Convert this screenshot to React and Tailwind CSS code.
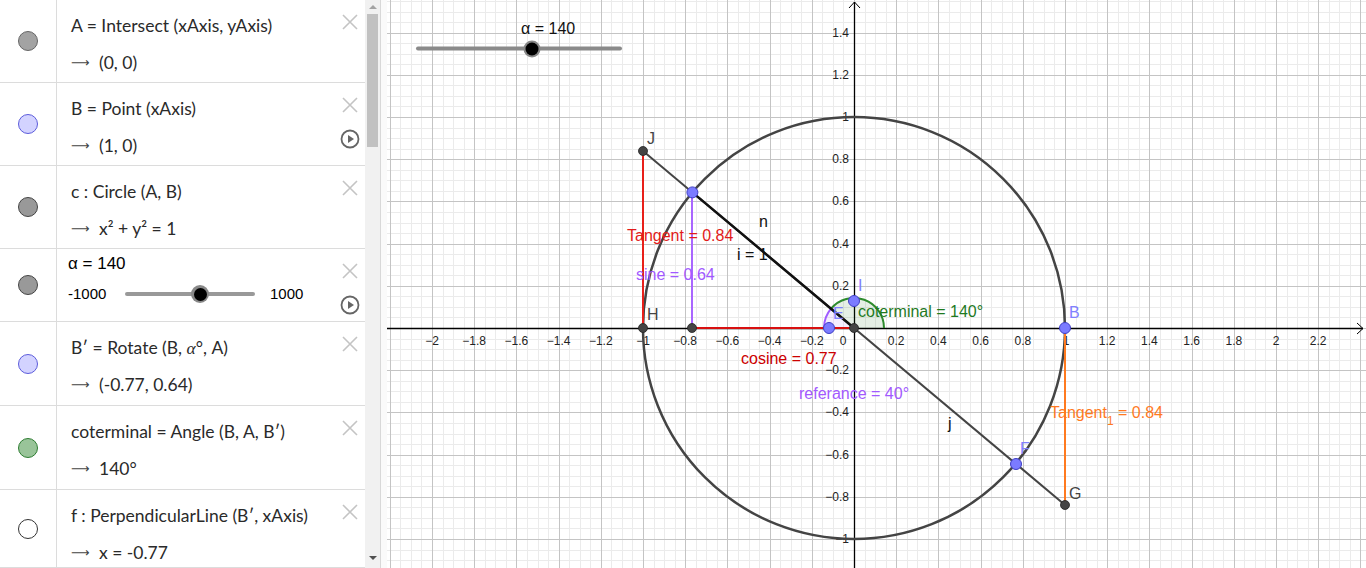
import React from 'react';

const OX = 854;
const OY = 328;
const S = 211;
const px = (x) => OX + x * S;
const py = (y) => OY - y * S;

const rows = [
  { h: 'h-[83px]', dot: 'bg-[#a3a3a3] border-[#666]', line1: 'A = Intersect (xAxis, yAxis)', line2: '(0, 0)' },
  { h: 'h-[83px]', dot: 'bg-[#d3d3ff] border-[#5c5cdb]', line1: 'B = Point (xAxis)', line2: '(1, 0)', play: true },
  { h: 'h-[83px]', dot: 'bg-[#999] border-[#444]', line1: 'c : Circle (A, B)', line2: 'x² + y² = 1' },
  { h: 'h-[73px]', dot: 'bg-[#999] border-[#444]', slider: true, play: true },
  { h: 'h-[84px]', dot: 'bg-[#d3d3ff] border-[#5c5cdb]', rotate: true, line2: '(-0.77, 0.64)' },
  { h: 'h-[84px]', dot: 'bg-[#99c499] border-[#2e7d32]', line1: 'coterminal = Angle (B, A, B′)', line2: '140°' },
  { h: 'flex-1', dot: 'bg-white border-[#333]', line1: 'f : PerpendicularLine (B′, xAxis)', line2: 'x = -0.77' },
];

const CloseIcon = () => (
  <svg width="18" height="18" viewBox="0 0 18 18">
    <path d="M2 2 L16 16 M16 2 L2 16" stroke="#c4c4c4" strokeWidth="1.6" fill="none" />
  </svg>
);

const PlayIcon = () => (
  <svg width="20" height="20" viewBox="0 0 20 20">
    <circle cx="10" cy="10" r="8.5" stroke="#666" strokeWidth="1.8" fill="none" />
    <path d="M8 6 L14 10 L8 14 Z" fill="#666" />
  </svg>
);

const Arrow = () => (
  <span className="inline-block w-[28px] text-[#444] font-['DejaVu_Sans',sans-serif] text-[13px]">⟶</span>
);

const AlgebraRow = ({ row }) => (
  <div className={`${row.h} flex border-b border-[#dcdcdc] shrink-0`}>
    <div className="w-[57px] shrink-0 border-r border-[#dcdcdc] flex items-center justify-center">
      <div className={`w-[20px] h-[20px] rounded-full border ${row.dot}`} />
    </div>
    <div className="flex-1 pl-[14px] text-[#2a2a2a] font-['Lato',sans-serif] text-[17.5px]">
      {row.slider ? (
        <div className="pt-[3px] font-['Liberation_Sans',sans-serif] text-black">
          <div className="text-[17px] h-[24px] leading-[24px] -ml-[3px]">α = 140</div>
          <div className="flex items-center h-[24px] mt-[6px] -ml-[3px] text-[15px]">
            <span className="w-[57px]">-1000</span>
            <div className="relative w-[130px] h-[4px] bg-[#999] rounded-full">
              <div className="absolute left-[66px] -top-[7px] w-[18px] h-[18px] rounded-full bg-[#888] flex items-center justify-center">
                <div className="w-[13px] h-[13px] rounded-full bg-black" />
              </div>
            </div>
            <span className="ml-[15px]">1000</span>
          </div>
        </div>
      ) : (
        <div className="pt-[14px]">
          <div className="h-[24px] leading-[24px] whitespace-nowrap">
            {row.rotate ? (
              <>B′ = Rotate (B, <i className="font-['Liberation_Serif',serif]">α</i>°, A)</>
            ) : (
              row.line1
            )}
          </div>
          <div className="h-[24px] leading-[24px] mt-[13px] flex items-center whitespace-nowrap">
            <Arrow />
            <span>{row.line2}</span>
          </div>
        </div>
      )}
    </div>
    <div className="w-[30px] shrink-0 flex flex-col items-center pt-[13px] gap-[15px]">
      <CloseIcon />
      {row.play && <PlayIcon />}
    </div>
  </div>
);

const Grid = () => {
  const minor = [];
  const major = [];
  const step = S * 0.05;
  for (let i = -60; i <= 60; i++) {
    const x = Math.round(OX + i * step) + 0.5;
    if (x < 387 || x > 1366) continue;
    const isMajor = i % 4 === 0;
    const el = <line key={'vx' + i} x1={x} y1={0} x2={x} y2={568} stroke={isMajor ? '#c4c4c4' : '#ebebeb'} strokeWidth="1" />;
    (isMajor ? major : minor).push(el);
  }
  for (let j = -40; j <= 40; j++) {
    const y = Math.round(OY + j * step) + 0.5;
    if (y < 0 || y > 568) continue;
    const isMajor = j % 4 === 0;
    const el = <line key={'hy' + j} x1={387} y1={y} x2={1366} y2={y} stroke={isMajor ? '#c4c4c4' : '#ebebeb'} strokeWidth="1" />;
    (isMajor ? major : minor).push(el);
  }
  return (
    <g>
      {minor}
      {major}
    </g>
  );
};

const fmt = (v) => {
  const r = Math.round(v * 10) / 10;
  const s = Math.abs(r).toString();
  return r < 0 ? '−' + s : s;
};

const AxisLabels = () => {
  const xs = [];
  for (let k = -10; k <= 11; k++) {
    if (k === 0 || k === 5) continue;
    const v = k * 0.2;
    xs.push(
      <text key={'x' + k} x={px(v)} y={345} textAnchor="middle">{fmt(v)}</text>
    );
  }
  const ys = [];
  for (let k = -5; k <= 7; k++) {
    if (k === 0) continue;
    const v = k * 0.2;
    ys.push(
      <text key={'y' + k} x={849} y={py(v) + 4} textAnchor="end">{fmt(v)}</text>
    );
  }
  return (
    <g fontFamily="Liberation Sans, sans-serif" fontSize="12" fill="#222">
      {xs}
      {ys}
      <text x={843} y={345} textAnchor="middle">0</text>
      <text x={1066} y={345} textAnchor="middle">1</text>
    </g>
  );
};

const Pt = ({ x, y, blue }) =>
  blue ? (
    <circle cx={x} cy={y} r="5.5" fill="#7b7bff" stroke="#3e3ec4" strokeWidth="1" />
  ) : (
    <circle cx={x} cy={y} r="4.5" fill="#444" stroke="#222" strokeWidth="0.8" />
  );

const Graphics = () => {
  const J = [643, 151];
  const Bp = [692.4, 192.4];
  const G = [1065, 505];
  const r = 30;
  const a140x = OX + r * Math.cos((140 * Math.PI) / 180);
  const a140y = OY - r * Math.sin((140 * Math.PI) / 180);
  return (
    <svg width="979" height="568" viewBox="387 0 979 568" className="block">
      <rect x="387" y="0" width="979" height="568" fill="#fff" />
      <Grid />
      {/* axes */}
      <line x1="387" y1={OY + 0.5} x2="1363" y2={OY + 0.5} stroke="#000" strokeWidth="1.3" />
      <path d={`M1357 ${OY - 5} L1363 ${OY + 0.5} L1357 ${OY + 6}`} stroke="#000" strokeWidth="1" fill="none" />
      <line x1={OX + 0.5} y1="568" x2={OX + 0.5} y2="2" stroke="#000" strokeWidth="1.3" />
      <path d={`M${OX - 5} 8 L${OX + 0.5} 2 L${OX + 6} 8`} stroke="#000" strokeWidth="1" fill="none" />
      <AxisLabels />

      {/* angle sectors */}
      <path d={`M${OX} ${OY} L${OX + r} ${OY} A${r} ${r} 0 0 0 ${a140x} ${a140y} Z`} fill="rgba(0,100,0,0.1)" />
      <path d={`M${OX + r} ${OY} A${r} ${r} 0 0 0 ${a140x} ${a140y}`} fill="none" stroke="#2e8b2e" strokeWidth="2" />
      <path d={`M${OX} ${OY} L${a140x} ${a140y} A${r} ${r} 0 0 0 ${OX - r} ${OY} Z`} fill="rgba(160,90,255,0.1)" />
      <path d={`M${a140x} ${a140y} A${r} ${r} 0 0 0 ${OX - r} ${OY}`} fill="none" stroke="#a05cff" strokeWidth="2" />

      {/* unit circle */}
      <circle cx={OX} cy={OY} r={S} fill="none" stroke="#444" strokeWidth="2.5" />

      {/* colored segments */}
      <line x1={643} y1={OY} x2={643} y2={J[1]} stroke="#e8201a" strokeWidth="2" />
      <line x1={692} y1={OY} x2={OX} y2={OY} stroke="#d81010" strokeWidth="2" />
      <line x1={692} y1={OY} x2={692} y2={Bp[1]} stroke="#a966ff" strokeWidth="2" />
      <line x1={1065} y1={OY} x2={1065} y2={G[1]} stroke="#ff7a1f" strokeWidth="2" />

      {/* line j and segment i */}
      <line x1={J[0]} y1={J[1]} x2={G[0]} y2={G[1]} stroke="#444" strokeWidth="2" />
      <line x1={Bp[0]} y1={Bp[1]} x2={OX} y2={OY} stroke="#111" strokeWidth="2.5" />

      {/* graphics slider */}
      <line x1="418" y1="48.5" x2="620" y2="48.5" stroke="#8a8a8a" strokeWidth="4" strokeLinecap="round" />
      <circle cx="532" cy="49" r="8.5" fill="#888" />
      <circle cx="532" cy="49" r="6.5" fill="#000" />
      <text x="521" y="34" fontFamily="Liberation Sans, sans-serif" fontSize="16" fill="#111">α = 140</text>

      {/* points */}
      <Pt x={643} y={OY} />
      <Pt x={692} y={OY} />
      <Pt x={OX} y={OY} />
      <Pt x={J[0]} y={J[1]} />
      <Pt x={G[0]} y={G[1]} />
      <Pt x={Bp[0]} y={Bp[1]} blue />
      <Pt x={829} y={OY} blue />
      <Pt x={OX} y={301} blue />
      <Pt x={1065} y={OY} blue />
      <Pt x={1016} y={464} blue />

      {/* labels */}
      <g fontFamily="Liberation Sans, sans-serif" fontSize="16">
        <text x="647" y="144" fill="#444">J</text>
        <text x="647" y="320" fill="#444">H</text>
        <text x="1069" y="499" fill="#444">G</text>
        <text x="858" y="291" fill="#8080ff">I</text>
        <text x="833" y="319" fill="#8080ff">E</text>
        <text x="1069" y="318" fill="#8080ff">B</text>
        <text x="1020" y="454" fill="#8080ff">F</text>
        <text x="759" y="227" fill="#111">n</text>
        <text x="737" y="260" fill="#111">i = 1</text>
        <text x="948" y="429" fill="#111">j</text>
        <text x="627" y="241" fill="#e21a1a">Tangent = 0.84</text>
        <text x="636" y="280" fill="#a259ff">sine = 0.64</text>
        <text x="741" y="364" fill="#cc0000">cosine = 0.77</text>
        <text x="799" y="399" fill="#a259ff">referance = 40°</text>
        <text x="858" y="317" fill="#1f7a1f">coterminal = 140°</text>
        <text x="1050" y="418" fill="#ff7a1f">
          Tangent<tspan fontSize="12" dy="7">1</tspan><tspan dy="-7"> = 0.84</tspan>
        </text>
      </g>
    </svg>
  );
};

export default function App() {
  return (
    <div className="flex w-[1366px] h-[568px] overflow-hidden bg-white">
      {/* Algebra view */}
      <div className="w-[365px] shrink-0 flex flex-col h-full">
        {rows.map((row, i) => (
          <AlgebraRow key={i} row={row} />
        ))}
      </div>
      {/* scrollbar */}
      <div className="w-[15px] shrink-0 bg-[#f1f1f1] flex flex-col items-center h-full">
        <div className="h-[14px] flex items-center justify-center">
          <div className="w-0 h-0 border-l-[4px] border-r-[4px] border-b-[4px] border-l-transparent border-r-transparent border-b-[#a3a3a3]" />
        </div>
        <div className="w-[11px] h-[133px] bg-[#c1c1c1]" />
        <div className="flex-1" />
        <div className="h-[20px] flex items-center justify-center">
          <div className="w-0 h-0 border-l-[4px] border-r-[4px] border-t-[4px] border-l-transparent border-r-transparent border-t-[#505050]" />
        </div>
      </div>
      {/* splitter */}
      <div className="w-[7px] shrink-0 h-full border-l border-[#d8d8d8] bg-[#fafafa]" />
      {/* graphics view */}
      <div className="flex-1 h-full">
        <Graphics />
      </div>
    </div>
  );
}
